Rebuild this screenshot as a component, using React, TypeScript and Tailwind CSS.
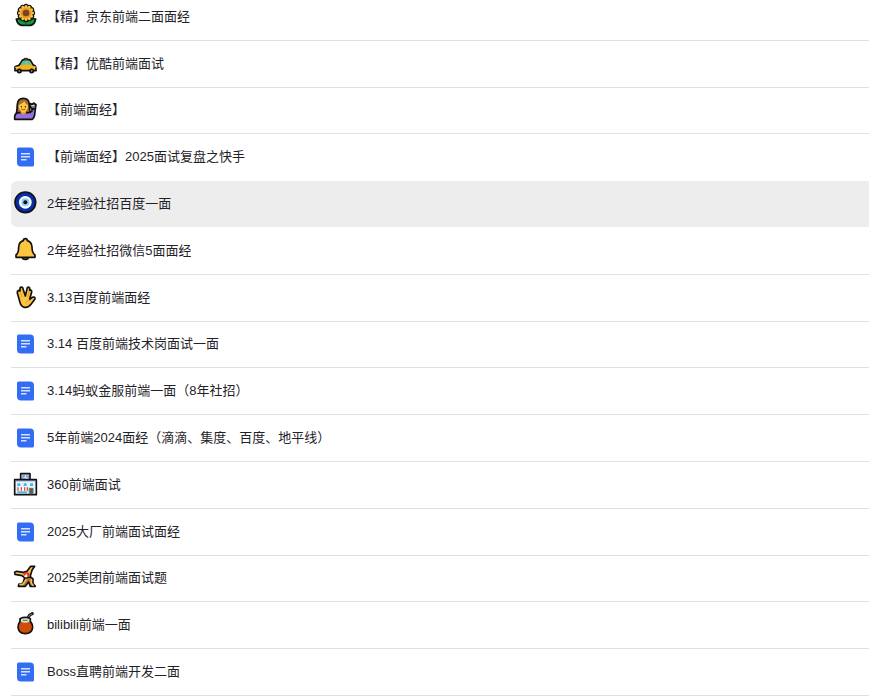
import type { ReactNode } from "react";
import clsx from "clsx";

function Emoji({ viewBox, children }: { viewBox: string; children: ReactNode }) {
  return (
    <svg
      viewBox={viewBox}
      className="w-6 h-6 mb-1 shrink-0 overflow-visible"
      fill="none"
      stroke="#111"
      strokeWidth={5}
      strokeLinejoin="round"
      strokeLinecap="round"
      aria-hidden="true"
    >
      {children}
    </svg>
  );
}

function DocIcon() {
  return (
    <svg viewBox="0 0 24 24" className="w-6 h-6 shrink-0" aria-hidden="true">
      <path
        d="M5.5 2.5H17Q21 2.5 21 6.5V20Q21 21.5 19.5 21.5H8Q4 21.5 4 17.5V4Q4 2.5 5.5 2.5Z"
        fill="#336df4"
      />
      <path d="M8 8.8H17M8 11.8H17M8 14.8H13.5" stroke="#d3e1ff" strokeWidth={1.5} />
    </svg>
  );
}

const petals = [0, 30, 60, 90, 120, 150, 180, 210, 240, 270, 300, 330];

function Sunflower() {
  return (
    <Emoji viewBox="24 9 72 72">
      <path
        d="M60 64V58H66V64Q80 54 92 57Q89 74 77 76H50Q37 74 34 57Q48 54 60 64Z"
        fill="#109b3c"
      />
      <path d="M63 60V75" stroke="#0b5d25" strokeWidth={3} />
      {petals.map((deg) => (
        <ellipse key={deg} cx={63} cy={23} rx={6} ry={9} transform={`rotate(${deg} 63 39)`} />
      ))}
      {petals.map((deg) => (
        <ellipse
          key={deg}
          cx={63}
          cy={24}
          rx={5}
          ry={9}
          transform={`rotate(${deg} 63 39)`}
          fill="#f9c13c"
          stroke="none"
        />
      ))}
      <circle cx={63} cy={39} r={16} fill="#e9962d" stroke="none" />
      <circle cx={63} cy={39} r={10} fill="#7b431d" stroke="none" />
    </Emoji>
  );
}

function Taxi() {
  return (
    <Emoji viewBox="24 6 72 72">
      <path
        d="M30 68V56L43 51L51 38Q53 35 57 35H71Q75 35 77 38L84 50L91 54Q93 56 93 68Z"
        fill="#f6b01c"
      />
      <path d="M48 50L54 39H63V50Z" fill="#37c8c5" stroke="none" />
      <path d="M66 50V39H73L80 50Z" fill="#37c8c5" stroke="none" />
      <path d="M58 34V31H67V34" fill="#f6d34a" strokeWidth={3} />
      <path d="M32 58H38M87 57H92" stroke="#fbe27a" strokeWidth={3} />
      <circle cx={43} cy={69} r={5} fill="#aaa" />
      <circle cx={80} cy={69} r={5} fill="#aaa" />
    </Emoji>
  );
}

function Woman() {
  return (
    <Emoji viewBox="24 13 72 72">
      <path d="M34 68Q36 55 37 38Q38 20 55 20Q72 20 73 38Q73 57 77 68Z" fill="#a66a32" />
      <path
        d="M29 83V76Q29 65 40 63H69Q76 64 81 58V50L91 52L89 70Q87 80 82 83Z"
        fill="#9870d8"
      />
      <path d="M47 56V64Q55 72 63 64V56Z" fill="#eba52b" stroke="none" />
      <path d="M41 41Q53 36 58 29Q61 38 69 40Q70 60 55 61Q41 59 41 41Z" fill="#fdca3f" stroke="none" />
      <path d="M49 44V46M61 44V46" strokeWidth={3} />
      <path d="M50 53Q55 56 60 53" stroke="#a7441f" strokeWidth={3} />
      <path d="M80 51L74 42L75 36L82 38L86 34L93 39L91 52Z" fill="#777" />
      <path d="M80 42H87" stroke="#e4e4e4" strokeWidth={3} />
    </Emoji>
  );
}

function Nazar() {
  return (
    <Emoji viewBox="24 30 72 72">
      <circle cx={61} cy={67} r={31} fill="#0a2dad" />
      <circle cx={61} cy={67} r={19} fill="#fff" stroke="none" />
      <circle cx={61} cy={67} r={12} fill="#8fd0f2" stroke="none" />
      <circle cx={61} cy={67} r={6} fill="#080f19" stroke="none" />
    </Emoji>
  );
}

function Bell() {
  return (
    <Emoji viewBox="24 14 72 72">
      <path d="M52 74H70Q70 81 61 81Q52 81 52 74Z" fill="#dc921c" />
      <path
        d="M55 25Q55 19 61 19Q67 19 67 25Q80 29 81 44Q81 62 90 68V75H33V68Q41 62 41 44Q42 29 55 25Z"
        fill="#fdc43f"
      />
    </Emoji>
  );
}

function Vulcan() {
  return (
    <Emoji viewBox="24 10 72 72">
      <path
        d="M44 62L37 37Q36 30 42 29L45 31V22Q49 17 53 21L61 46L67 21Q71 17 74 22V29Q81 27 80 34L74 56L82 50Q91 47 90 55L78 71Q70 82 58 80Q47 77 44 62Z"
        fill="#fdc43f"
      />
      <path d="M46 34L51 49M73 32L69 49M62 67Q66 59 74 58" stroke="#ce8b1c" strokeWidth={2} />
    </Emoji>
  );
}

function Store() {
  return (
    <Emoji viewBox="24 12 72 72">
      <path d="M29 38H94V83H29Z" fill="#e9f4fa" />
      <path d="M47 20H75V38H47Z" fill="#d9e6f2" />
      <path d="M53 25H58V29H53V34H59M65 25V30H70M70 25V34" stroke="#4169ce" strokeWidth={2} />
      <path d="M32 41H91" stroke="#5d5d7c" strokeWidth={4} />
      <path d="M37 49H46V57H37ZM56 49H65V57H56ZM75 49H84V57H75Z" fill="#37bde9" stroke="none" />
      <path d="M37 62H67V70H37Z" fill="#fff" stroke="none" />
      <path d="M39 62V70M49 62V70M59 62V70M67 62V70" stroke="#e54b3e" strokeWidth={4} />
      <path d="M37 73H66V79H37Z" fill="#49bce1" stroke="none" />
      <path d="M74 64H84V80H74Z" fill="#86512f" stroke="#3d7b79" strokeWidth={3} />
    </Emoji>
  );
}

function Cartwheel() {
  return (
    <Emoji viewBox="24 11 72 72">
      <path d="M60 49L72 46L84 56V70L91 78H76L71 65L61 78H40L42 71L54 69Z" fill="#a8742e" />
      <path
        d="M29 36L35 33L55 36L66 33L77 18L89 18L81 30L75 50L60 53L51 46L30 42Z"
        fill="#f9c544"
      />
      <path d="M54 38L67 35L75 40L73 50L58 50Z" fill="#e43b27" stroke="none" />
      <path d="M58 46L66 40L67 51H59Z" fill="#fff" stroke="none" />
      <path d="M63 58L54 72H45M79 58V69L84 75" stroke="#f6bc55" strokeWidth={5} />
    </Emoji>
  );
}

function Mate() {
  return (
    <Emoji viewBox="24 13 72 72">
      <path d="M67 38L74 25L82 21" strokeWidth={9} />
      <path d="M67 38L74 25L81 22" stroke="#888" strokeWidth={3} />
      <path d="M45 36Q61 28 76 36V44Q84 53 83 63Q80 81 61 81Q42 81 39 63Q39 53 45 44Z" fill="#cf4c0b" />
      <path d="M48 37Q61 32 73 37V45Q61 51 48 45Z" fill="#d4ded9" stroke="none" />
      <path d="M55 41H66" stroke="#29a456" strokeWidth={4} />
    </Emoji>
  );
}

const docs = [
  { title: "【精】京东前端二面面经", icon: <Sunflower /> },
  { title: "【精】优酷前端面试", icon: <Taxi /> },
  { title: "【前端面经】", icon: <Woman /> },
  { title: "【前端面经】2025面试复盘之快手", icon: <DocIcon /> },
  { title: "2年经验社招百度一面", icon: <Nazar /> },
  { title: "2年经验社招微信5面面经", icon: <Bell /> },
  { title: "3.13百度前端面经", icon: <Vulcan /> },
  { title: "3.14 百度前端技术岗面试一面", icon: <DocIcon /> },
  { title: "3.14蚂蚁金服前端一面（8年社招）", icon: <DocIcon /> },
  { title: "5年前端2024面经（滴滴、集度、百度、地平线）", icon: <DocIcon /> },
  { title: "360前端面试", icon: <Store /> },
  { title: "2025大厂前端面试面经", icon: <DocIcon /> },
  { title: "2025美团前端面试题", icon: <Cartwheel /> },
  { title: "bilibili前端一面", icon: <Mate /> },
  { title: "Boss直聘前端开发二面", icon: <DocIcon /> },
];

const activeIndex = 4;

export default function App() {
  return (
    <main className="bg-white overflow-hidden">
      {/* the list is scrolled a little, so the first row starts above the edge */}
      <ul className="-mt-1.5 grid auto-rows-fr min-h-[calc(100vh+6px)] pl-[11px] pb-[3px] text-[13px] leading-5 text-[#1f2329] font-['Liberation_Sans','Noto_Sans_CJK_SC',sans-serif]">
        {docs.map((doc, i) => (
          <li
            key={doc.title}
            className={clsx(
              "border-b",
              i === activeIndex || i === activeIndex - 1 ? "border-transparent" : "border-[#dee0e3]"
            )}
          >
            <a
              href="#"
              className={clsx(
                "h-full flex items-center gap-2.5 pl-0.5 pr-4",
                i === activeIndex && "bg-[#ededed] rounded-l-md"
              )}
            >
              {doc.icon}
              <span className="truncate">{doc.title}</span>
            </a>
          </li>
        ))}
      </ul>
    </main>
  );
}
